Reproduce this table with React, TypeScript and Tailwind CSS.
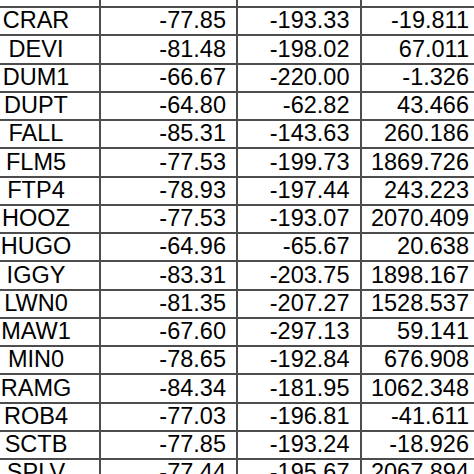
import React from "react";

type Row = [string, string, string, string];

const ROWS: Row[] = [
  ["COTZ", "-77.81", "-193.90", "1575.030"],
  ["CRAR", "-77.85", "-193.33", "-19.811"],
  ["DEVI", "-81.48", "-198.02", "67.011"],
  ["DUM1", "-66.67", "-220.00", "-1.326"],
  ["DUPT", "-64.80", "-62.82", "43.466"],
  ["FALL", "-85.31", "-143.63", "260.186"],
  ["FLM5", "-77.53", "-199.73", "1869.726"],
  ["FTP4", "-78.93", "-197.44", "243.223"],
  ["HOOZ", "-77.53", "-193.07", "2070.409"],
  ["HUGO", "-64.96", "-65.67", "20.638"],
  ["IGGY", "-83.31", "-203.75", "1898.167"],
  ["LWN0", "-81.35", "-207.27", "1528.537"],
  ["MAW1", "-67.60", "-297.13", "59.141"],
  ["MIN0", "-78.65", "-192.84", "676.908"],
  ["RAMG", "-84.34", "-181.95", "1062.348"],
  ["ROB4", "-77.03", "-196.81", "-41.611"],
  ["SCTB", "-77.85", "-193.24", "-18.926"],
  ["SPLV", "-77.44", "-195.67", "2067.894"],
];

export default function App() {
  return (
    <div
      className="w-[474px] h-[474px] overflow-hidden bg-white text-black text-[23.5px] leading-none"
      style={{ fontFamily: '"Liberation Sans", Arial, sans-serif' }}
    >
      <div className="mt-[-20.25px] w-[480px] flex flex-col">
        {ROWS.map((r) => (
          <div key={r[0]} className="h-[28.25px] flex border-b-2 border-[#4d4d4d] shrink-0">
            <div className="w-[100.5px] shrink-0 border-r-2 border-[#4d4d4d] flex items-center justify-center pr-[26.5px]">
              {r[0]}
            </div>
            <div className="w-[137px] shrink-0 border-r-2 border-[#4d4d4d] flex items-center justify-end pr-[9.5px]">
              {r[1]}
            </div>
            <div className="w-[124.5px] shrink-0 border-r-2 border-[#4d4d4d] flex items-center justify-end pr-[10.5px]">
              {r[2]}
            </div>
            <div className="flex-1 flex items-center justify-end pr-[11px]">
              {r[3]}
            </div>
          </div>
        ))}
      </div>
    </div>
  );
}
